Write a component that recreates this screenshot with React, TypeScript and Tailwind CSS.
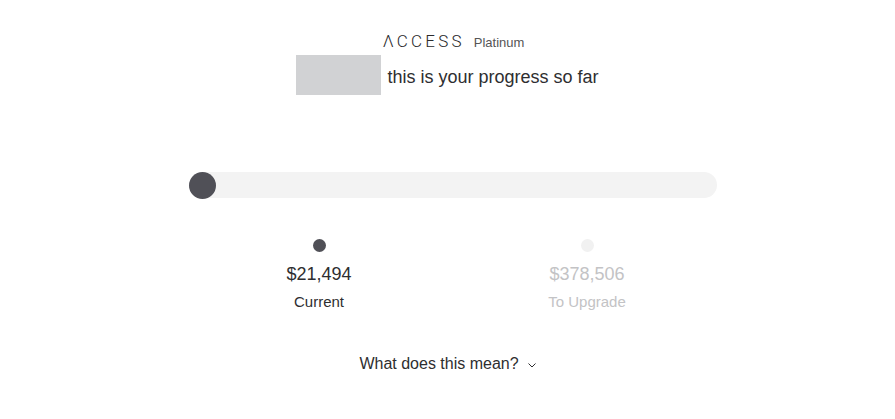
import React from 'react'

export default function App() {
  return (
    <div className="w-[895px] h-[419px] bg-white font-['Liberation_Sans',Arial,sans-serif] text-[#2e2e30] flex flex-col items-center">
      {/* Brand */}
      <div className="mt-[31px] ml-[12px] flex items-baseline gap-[9px] leading-[20px]">
        <span className="font-['Roboto',sans-serif] font-light text-[17px] tracking-[3.2px] text-[#2a2a2c]">
          ΛCCESS
        </span>
        <span className="text-[13px] text-[#555]">Platinum</span>
      </div>

      {/* Greeting */}
      <div className="mt-[2px] flex items-center gap-[6px]">
        <div className="w-[85px] h-[40px] bg-[#d1d2d4]" />
        <span className="mt-[4px] text-[18px] leading-[24px] text-[#2e2e30]">
          this is your progress so far
        </span>
      </div>

      {/* Progress track */}
      <div className="mt-[77px] ml-[11px] w-[528px] h-[26px] rounded-full bg-[#f3f3f3] flex items-center">
        <div className="w-[27px] h-[27px] rounded-full bg-[#505057]" />
      </div>

      {/* Figures */}
      <div className="mt-[41px] ml-[11px] w-[536px] grid grid-cols-2">
        <div className="flex flex-col items-center">
          <div className="w-[13px] h-[13px] rounded-full bg-[#505057]" />
          <div className="mt-[12px] text-[18px] leading-[20px] text-[#2e2e30]">$21,494</div>
          <div className="mt-[9px] text-[15px] leading-[18px] text-[#2e2e30]">Current</div>
        </div>
        <div className="flex flex-col items-center">
          <div className="w-[13px] h-[13px] rounded-full bg-[#f1f1f1]" />
          <div className="mt-[12px] text-[18px] leading-[20px] text-[#c3c3c5]">$378,506</div>
          <div className="mt-[9px] text-[15px] leading-[18px] text-[#c3c3c5]">To Upgrade</div>
        </div>
      </div>

      {/* Explainer toggle */}
      <button className="mt-[43px] flex items-center gap-[9px] text-[16px] leading-[20px] text-[#2e2e30]">
        What does this mean?
        <svg width="8" height="5" viewBox="0 0 8 5" fill="none" className="mt-[2px]">
          <path d="M0.5 0.5L4 4L7.5 0.5" stroke="#2e2e30" strokeWidth="1" />
        </svg>
      </button>
    </div>
  )
}
